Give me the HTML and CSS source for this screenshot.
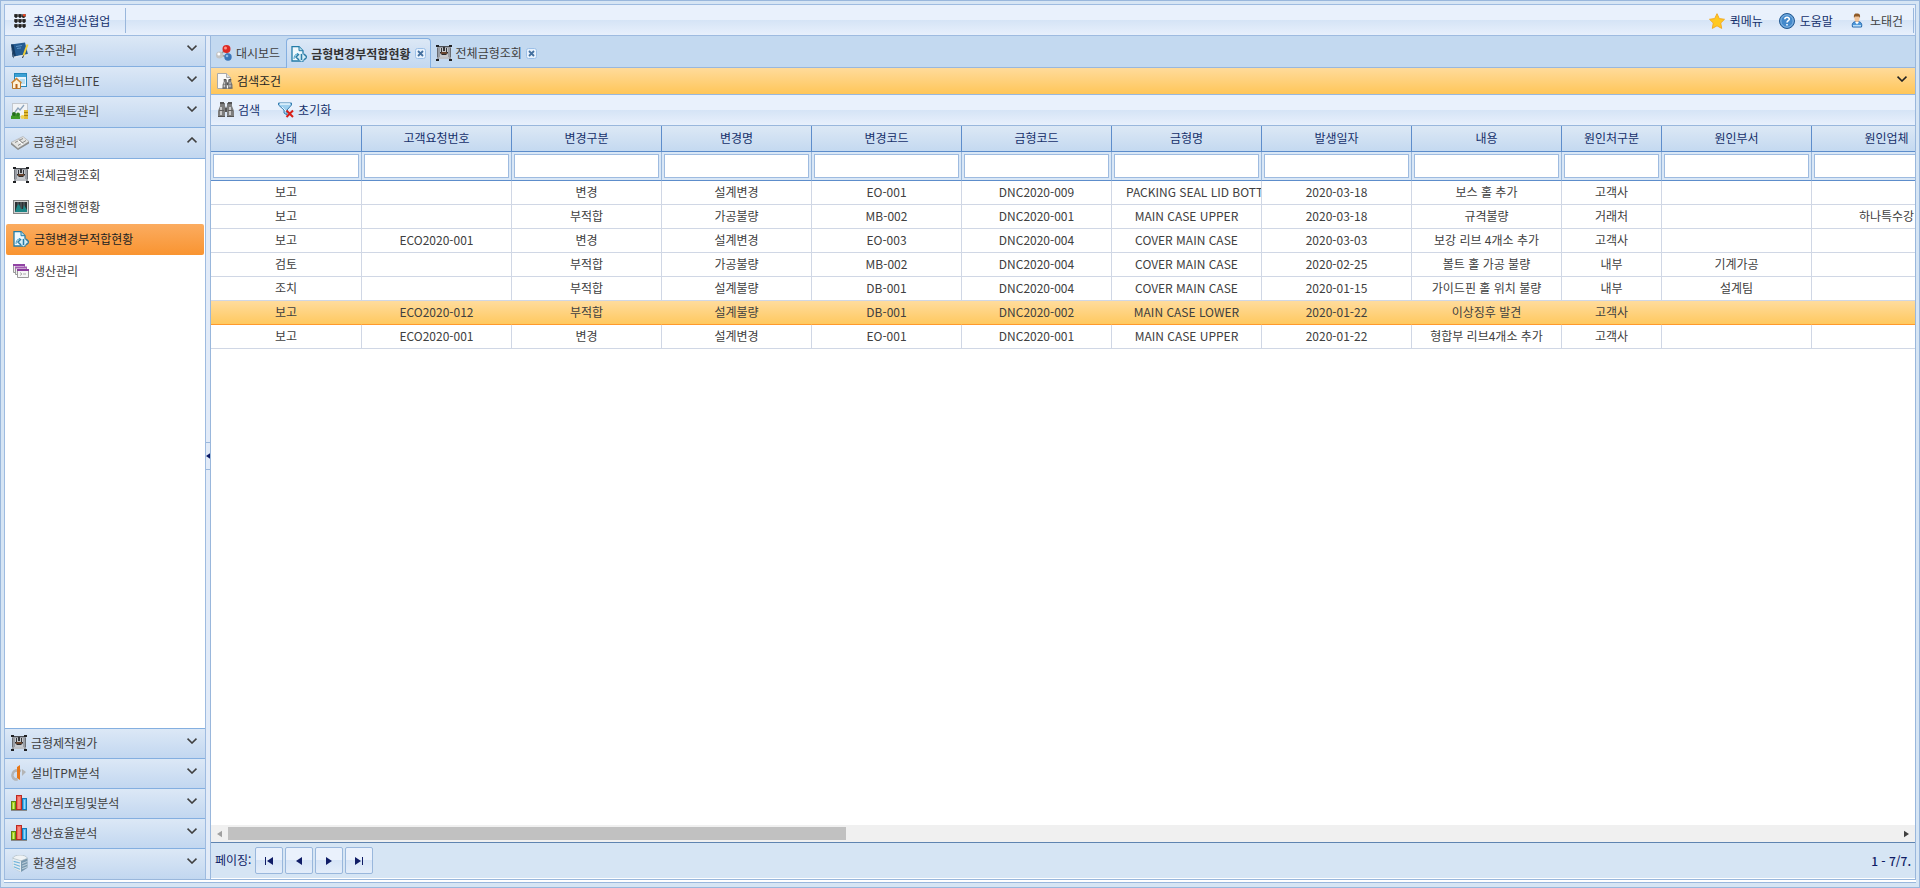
FILE: index.html
```
<!DOCTYPE html>
<html lang="ko">
<head>
<meta charset="utf-8">
<title>금형변경부적합현황</title>
<link rel="stylesheet" href="styles.css">
</head>
<body>
<svg class="defs" aria-hidden="true">
  <defs>
    <symbol id="i-rack" viewBox="0 0 16 16"><g fill="#777"><rect x="1" y="1" width="12" height="3"/><rect x="1" y="6" width="12" height="3"/><rect x="1" y="11" width="12" height="3"/></g><g fill="#222"><ellipse cx="3" cy="3" rx="1.500" ry="2"/><ellipse cx="7" cy="3" rx="1.500" ry="2"/><ellipse cx="3" cy="8" rx="1.500" ry="2"/><ellipse cx="7" cy="8" rx="1.500" ry="2"/><ellipse cx="11" cy="8" rx="1.500" ry="2"/><ellipse cx="3" cy="13" rx="1.500" ry="2"/><ellipse cx="7" cy="13" rx="1.500" ry="2"/><ellipse cx="11" cy="13" rx="1.500" ry="2"/><ellipse cx="10.500" cy="3.500" rx="1.500" ry="1.500"/></g><rect x="10" y="1" width="2.500" height="2.500" rx="1" fill="#f0431c"/></symbol>
    <symbol id="i-book" viewBox="0 0 18 16"><path d="M0 2 14 0l3 12-14 2z" fill="#245b91"/><path d="M0 2 3 16 1.500 14z" fill="#0d2945"/><path d="m0 2 2.500 0L5 14l-2 1z" fill="#143a61"/><path d="M3 15.500 17 13v-1.500L3 14z" fill="#dfe6ee"/><path d="m5 4 6-1M6 6l4-.6" stroke="#5e94c7"/><path d="m16.500 2-4 11" stroke="#f1cf38" stroke-width="2"/><path d="m12.500 13-1 2.500" stroke="#333"/></symbol>
    <symbol id="i-hub" viewBox="0 0 16 16"><rect x="3.500" y=".5" width="12" height="13" fill="#e9f4fb" stroke="#2386ba"/><path d="M4 1h11v3H4z" fill="#3ba0d4"/><path d="M9 6h5v5H9z" fill="#b7dcef"/><path d="M1.500 9.500 5.500 6l4 3.500v6h-8z" fill="#fff1d6" stroke="#b77b32"/><path d="m.5 10 5-4.500 5 4.500" fill="none" stroke="#cd8330" stroke-width="1.500"/><path d="M4.500 11h2v4.500h-2z" fill="#b8651d"/></symbol>
    <symbol id="i-project" viewBox="0 0 18 17"><rect x="1.500" y=".5" width="15" height="13" fill="#f2f4f6" stroke="#c3c8ce"/><path d="m4 9 3-4 2 2 4-5" fill="none" stroke="#8da4bd" stroke-width="1.300"/><path d="M0 16v-3l3-2 2 1 3-1 1 3v2z" fill="#3f9b28"/><circle cx="3" cy="11" r="2" fill="#246d1e"/><circle cx="7" cy="11.500" r="2" fill="#2e8420"/><path d="M13 7h4v9h-4z" fill="#e2bb36"/><path d="M13 9.500h4m-4 3h4" stroke="#a9800d"/><circle cx="11.500" cy="14" r="2" fill="#f1d256"/></symbol>
    <symbol id="i-mold" viewBox="0 0 18 16"><path d="m0 8 12-6 6 5-11 7z" fill="#e4e4e2" stroke="#a5a5a5" stroke-width=".6"/><path d="m0 8 7 6v1.500L0 10zM7 14l11-7v2L7 15.500z" fill="#8b8b89"/><path d="m4 8 8-4M7 11l8-5" stroke="#8b8b89"/><path d="m7 6 5 4" stroke="#fff" stroke-width="1.500"/><path d="m8 5 4 4" stroke="#777"/></symbol>
    <symbol id="i-machine" viewBox="0 0 16 16"><path d="M1 1h14v13H1z" fill="#9a9ea5"/><path d="M0 0h3v2H0zM13 0h3v2h-3zM0 14h3v2H0zM13 14h3v2h-3z" fill="#202124"/><path d="M3 1h10v1H3z" fill="#4c4f55"/><path d="M4 3h8v9H4z" fill="#c6c9cd"/><path d="M1.500 3v9M14.500 3v9" stroke="#696d74"/><path d="M5 3h1v4H5zM10 3h1v4h-1zM7 2h2v4H7z" fill="#33353a"/><path d="M4 7h8v1l-2 2H6L4 8z" fill="#2a2b2e"/><path d="M5 8h6" stroke="#a56131"/><path d="M3 13h10" stroke="#e2e4e7"/></symbol>
    <symbol id="i-monitor" viewBox="0 0 16 14"><rect x=".5" y=".5" width="15" height="13" fill="#d1d1d1" stroke="#858585"/><path d="M2 2h12v10H2z" fill="#2b3033"/><path d="M5 2v10M8 2v10M11 2v10" stroke="#626b70"/><path d="M2 12 4 6l2-2 2 5 2 0 1-4 3 5v2z" fill="#1d8585"/></symbol>
    <symbol id="i-docgear" viewBox="0 0 16 16"><path d="M1 .7h7l4 4V15H1z" fill="#eff8fd" stroke="#237ca8" stroke-width="1.300"/><path d="M8 .7v4h4" fill="#b8dceb" stroke="#237ca8"/><path d="M3 13c0-3 1-5 4-5l-1-1" fill="none" stroke="#42a0c8"/><path d="m10.500 7 5 4-5 4.500-5-4.500z" fill="#d3ecf6"/><path d="m8 8-3 3 3 3m5-6 3 3-3 3" fill="none" stroke="#2a7ca6" stroke-width="1.500"/><path d="M10.500 8v6" stroke="#2a7ca6" stroke-width="1.500"/></symbol>
    <symbol id="i-windows" viewBox="0 0 16 16"><path d="M.5 1.500h11v8H.5z" fill="#eee" stroke="#999"/><path d="M0 1h12v2H0z" fill="#9144a4"/><path d="M2.500 4.500h11v7h-11z" fill="#eee" stroke="#999"/><path d="M2 3.500h12v2H2z" fill="#a459b4"/><path d="M4.500 7.500h11v7h-11z" fill="#f6f6f6" stroke="#999"/><path d="M4 6h12v2H4z" fill="#8a3a9e"/><path d="m7 9.500 2 1.500-2 1.500m3-1.500h3" fill="none" stroke="#aaa"/></symbol>
    <symbol id="i-tpm" viewBox="0 0 16 16"><path d="M10 6C4 4 1 7 1.500 11c.5 3 3 4 5 3" fill="none" stroke="#b4b4b4" stroke-width="2.600"/><path d="M11 4v7l4-4z" fill="#b4b4b4"/><path d="m6 2 3-2v15l-3-2z" fill="#e87716"/></symbol>
    <symbol id="i-bars" viewBox="0 0 16 16"><path d="M0 15.500h16" stroke="#888"/><rect x=".5" y="6.500" width="4" height="8" fill="#a8d51f" stroke="#5c8914"/><rect x="5.500" y=".5" width="5" height="14" fill="#f2685a" stroke="#bd2a22"/><rect x="11.500" y="3.500" width="4" height="11" fill="#4cb6ef" stroke="#1579b8"/><path d="M2.500 8v6M8 2v12M13.500 5v9" stroke="#fff" stroke-opacity=".45"/></symbol>
    <symbol id="i-server" viewBox="0 0 16 16"><path d="M1 3v9l7 4 7-4V3z" fill="#b8c6d0"/><path d="m1 3 8 2v11l-8-4z" fill="#e3ebf0"/><path d="m9 5 6-2v9l-6 4z" fill="#7797ae"/><path d="m2 6 6 1.500M2 8.500l6 2M2 11l6 2.500" stroke="#70b4dc"/><path d="M1 3c2-4 12-4 14 0L9 5.500z" fill="#eff3f5" stroke="#a9b6bf" stroke-width=".6"/><path d="m10 8 5-2M10 10.500l5-2M10 13l5-2" stroke="#bed0dc"/></symbol>
    <symbol id="i-balls" viewBox="0 0 16 16"><path d="m4 10 6-6 2 8z" fill="none" stroke="#999" stroke-width="1.500"/><circle cx="3.500" cy="10" r="3.500" fill="#c4c4c4"/><circle cx="2.800" cy="9" r="1.500" fill="#fff"/><circle cx="10.500" cy="4" r="4" fill="#dd2822"/><circle cx="9.500" cy="3" r="1.500" fill="#ff9186"/><circle cx="12" cy="12" r="3.700" fill="#3b76b9"/><circle cx="11" cy="11" r="1.300" fill="#91bce6"/></symbol>
    <symbol id="i-binoc" viewBox="0 0 16 16"><path d="M2 1h5v3l1 2 1-2V1h5v3l2 5v6H9V9H7v6H0V9l2-5z" fill="#7d7d7d"/><path d="M2 0h4v2H2zM10 0h4v2h-4zM0 14h7v1H0zM9 14h7v1H9zM7 6h2v4H7z" fill="#555"/><path d="M2 5h2v8H2zM11 5h2v8h-2z" fill="#c9c9c9"/><path d="M1 8.500h5M10 8.500h5" stroke="#606060"/></symbol>
    <symbol id="i-docfind" viewBox="0 0 16 16"><path d="M.5.5h9l4 4v11H.500z" fill="#f9f9f9" stroke="#aaa"/><path d="M9.500.5v4h4" fill="#ddd" stroke="#aaa"/><use href="#i-binoc" x="5" y="6" width="11" height="10"/></symbol>
    <symbol id="i-filter" viewBox="0 0 16 16"><path d="M.5 1h13v2L9 8v5l-3-2V8L.5 3z" fill="#9ecfee" stroke="#367daf"/><path d="M2 2h10" stroke="#e9f7ff" stroke-width="1.500"/><path d="m4 5 4 4" stroke="#e9f7ff"/><path d="m8.500 8.500 6.500 6.500m0-6.500-6.500 6.500" stroke="#d81e17" stroke-width="2"/></symbol>
    <symbol id="i-star" viewBox="0 0 16 16"><path d="m8 .7 2.300 4.900 5.200.7-3.800 3.700 1 5.400L8 12.800l-4.700 2.600 1-5.400L.5 6.300l5.200-.7z" fill="#ffc91f" stroke="#f2ab27"/></symbol>
    <symbol id="i-help" viewBox="0 0 16 16"><circle cx="8" cy="8" r="7.500" fill="#4389cb" stroke="#235991"/><circle cx="8" cy="8" r="6.200" fill="none" stroke="#a8cdee" stroke-width=".7"/><path d="M5.800 6.200C6 3.500 10.500 3.700 10.300 6.200 10.200 7.700 8 7.800 8 9.600M8 11v1.500" fill="none" stroke="#fff" stroke-width="1.600"/></symbol>
    <symbol id="i-user" viewBox="0 0 16 16"><path d="M3.500 14c-1-4 1-5.500 4.500-5.500s5.500 1.500 4.500 5.500z" fill="#4c97d9" stroke="#2467ab"/><path d="M4 12h8v1.500H4z" fill="#b9dcf7"/><path d="m6 9 2 2.500L10 9z" fill="#fff"/><ellipse cx="8" cy="5.500" rx="2.500" ry="3.500" fill="#f1c49a"/><path d="M5 5C4.500 1 6 .5 8 .5S11.500 1 11 5l-1-1.500H6z" fill="#8e5927"/></symbol>
    <symbol id="i-chev" viewBox="0 0 10 6"><path d="m.5.700 4.500 4.300 4.500-4.300" fill="none" stroke="currentColor" stroke-width="1.600"/></symbol>
    <symbol id="i-up" viewBox="0 0 10 6"><path d="m.5 5.300 4.500-4.300 4.500 4.300" fill="none" stroke="currentColor" stroke-width="1.600"/></symbol>
    <symbol id="i-close" viewBox="0 0 11 11"><rect x=".5" y=".5" width="10" height="10" rx="2" fill="#e8f2fd" stroke="#9cc0e8"/><path d="m3 3 5 5m0-5L3 8" stroke="#44709f" stroke-width="1.800"/></symbol>
    <symbol id="i-left" viewBox="0 0 6 8"><path d="M6 0v8L0 4z" fill="currentColor"/></symbol>
    <symbol id="i-right" viewBox="0 0 6 8"><path d="M0 0v8l6-4z" fill="currentColor"/></symbol>
    <symbol id="i-first" viewBox="0 0 8 8"><path d="M0 0h1v8H0zM8 0v8L2 4z" fill="currentColor"/></symbol>
    <symbol id="i-last" viewBox="0 0 8 8"><path d="M7 0h1v8H7zM0 0v8l6-4z" fill="currentColor"/></symbol>
  </defs>
</svg>
<div class="app">
  <header class="topbar">
    <button class="brand"><svg class="icon"><use href="#i-rack"/></svg>초연결생산협업</button>
    <nav class="quick">
      <button><svg class="icon"><use href="#i-star"/></svg>퀵메뉴</button>
      <button><svg class="icon"><use href="#i-help"/></svg>도움말</button>
      <button><svg class="icon"><use href="#i-user"/></svg><span class="user-name">노태건</span></button>
    </nav>
  </header>
  <div class="workspace">
    <nav class="sidebar">
      <button class="group"><svg class="icon large"><use href="#i-book"/></svg>수주관리<svg class="chev"><use href="#i-chev"/></svg></button>
      <button class="group short"><svg class="icon"><use href="#i-hub"/></svg>협업허브LITE<svg class="chev"><use href="#i-chev"/></svg></button>
      <button class="group"><svg class="icon large"><use href="#i-project"/></svg>프로젝트관리<svg class="chev"><use href="#i-chev"/></svg></button>
      <button class="group"><svg class="icon large"><use href="#i-mold"/></svg>금형관리<svg class="chev"><use href="#i-up"/></svg></button>
      <div class="menu">
        <button class="item"><svg class="icon"><use href="#i-machine"/></svg>전체금형조회</button>
        <button class="item"><svg class="icon"><use href="#i-monitor"/></svg>금형진행현황</button>
        <button class="item selected"><svg class="icon"><use href="#i-docgear"/></svg>금형변경부적합현황</button>
        <button class="item"><svg class="icon"><use href="#i-windows"/></svg>생산관리</button>
      </div>
      <button class="group"><svg class="icon"><use href="#i-machine"/></svg>금형제작원가<svg class="chev"><use href="#i-chev"/></svg></button>
      <button class="group"><svg class="icon"><use href="#i-tpm"/></svg>설비TPM분석<svg class="chev"><use href="#i-chev"/></svg></button>
      <button class="group"><svg class="icon"><use href="#i-bars"/></svg>생산리포팅및분석<svg class="chev"><use href="#i-chev"/></svg></button>
      <button class="group"><svg class="icon"><use href="#i-bars"/></svg>생산효율분석<svg class="chev"><use href="#i-chev"/></svg></button>
      <button class="group"><svg class="icon large"><use href="#i-server"/></svg>환경설정<svg class="chev"><use href="#i-chev"/></svg></button>
    </nav>
    <div class="splitter"><button class="collapse" aria-label="메뉴 접기"><svg><use href="#i-left"/></svg></button></div>
    <main class="main">
      <div class="tabs" role="tablist">
        <div class="tab"><svg class="icon"><use href="#i-balls"/></svg><button role="tab">대시보드</button></div>
        <div class="tab active"><svg class="icon"><use href="#i-docgear"/></svg><button role="tab" aria-selected="true">금형변경부적합현황</button><button class="close" aria-label="닫기"><svg><use href="#i-close"/></svg></button></div>
        <div class="tab"><svg class="icon"><use href="#i-machine"/></svg><button role="tab">전체금형조회</button><button class="close" aria-label="닫기"><svg><use href="#i-close"/></svg></button></div>
      </div>
      <button class="criteria"><svg class="icon"><use href="#i-docfind"/></svg>검색조건<svg class="chev"><use href="#i-chev"/></svg></button>
      <div class="tools">
        <button><svg class="icon"><use href="#i-binoc"/></svg>검색</button>
        <button><svg class="icon"><use href="#i-filter"/></svg>초기화</button>
      </div>
      <div class="grid">
        <table>
          <colgroup><col class="first"><col><col><col><col><col><col><col><col><col class="narrow"><col><col></colgroup>
          <thead>
            <tr><th>상태</th><th>고객요청번호</th><th>변경구분</th><th>변경명</th><th>변경코드</th><th>금형코드</th><th>금형명</th><th>발생일자</th><th>내용</th><th>원인처구분</th><th>원인부서</th><th>원인업체</th></tr>
            <tr class="filters"><td><input type="text" aria-label="상태"></td><td><input type="text" aria-label="고객요청번호"></td><td><input type="text" aria-label="변경구분"></td><td><input type="text" aria-label="변경명"></td><td><input type="text" aria-label="변경코드"></td><td><input type="text" aria-label="금형코드"></td><td><input type="text" aria-label="금형명"></td><td><input type="text" aria-label="발생일자"></td><td><input type="text" aria-label="내용"></td><td><input type="text" aria-label="원인처구분"></td><td><input type="text" aria-label="원인부서"></td><td><input type="text" aria-label="원인업체"></td></tr>
          </thead>
          <tbody>
            <tr><td>보고</td><td></td><td>변경</td><td>설계변경</td><td>EO-001</td><td>DNC2020-009</td><td class="long">PACKING SEAL LID BOTTOM</td><td>2020-03-18</td><td>보스 홀 추가</td><td>고객사</td><td></td><td></td></tr>
            <tr><td>보고</td><td></td><td>부적합</td><td>가공불량</td><td>MB-002</td><td>DNC2020-001</td><td>MAIN CASE UPPER</td><td>2020-03-18</td><td>규격불량</td><td>거래처</td><td></td><td>하나특수강</td></tr>
            <tr><td>보고</td><td>ECO2020-001</td><td>변경</td><td>설계변경</td><td>EO-003</td><td>DNC2020-004</td><td>COVER MAIN CASE</td><td>2020-03-03</td><td>보강 리브 4개소 추가</td><td>고객사</td><td></td><td></td></tr>
            <tr><td>검토</td><td></td><td>부적합</td><td>가공불량</td><td>MB-002</td><td>DNC2020-004</td><td>COVER MAIN CASE</td><td>2020-02-25</td><td>볼트 홀 가공 불량</td><td>내부</td><td>기계가공</td><td></td></tr>
            <tr><td>조치</td><td></td><td>부적합</td><td>설계불량</td><td>DB-001</td><td>DNC2020-004</td><td>COVER MAIN CASE</td><td>2020-01-15</td><td>가이드핀 홀 위치 불량</td><td>내부</td><td>설계팀</td><td></td></tr>
            <tr class="current"><td>보고</td><td>ECO2020-012</td><td>부적합</td><td>설계불량</td><td>DB-001</td><td>DNC2020-002</td><td>MAIN CASE LOWER</td><td>2020-01-22</td><td>이상징후 발견</td><td>고객사</td><td></td><td></td></tr>
            <tr><td>보고</td><td>ECO2020-001</td><td>변경</td><td>설계변경</td><td>EO-001</td><td>DNC2020-001</td><td>MAIN CASE UPPER</td><td>2020-01-22</td><td>형합부 리브4개소 추가</td><td>고객사</td><td></td><td></td></tr>
          </tbody>
        </table>
      </div>
      <div class="scroll"><svg class="off"><use href="#i-left"/></svg><div class="track"><div class="thumb"></div></div><svg><use href="#i-right"/></svg></div>
      <footer class="paging">
        <span>페이징:</span>
        <button aria-label="처음"><svg class="wide"><use href="#i-first"/></svg></button>
        <button aria-label="이전"><svg><use href="#i-left"/></svg></button>
        <button aria-label="다음"><svg><use href="#i-right"/></svg></button>
        <button aria-label="마지막"><svg class="wide"><use href="#i-last"/></svg></button>
        <span class="count">1 - 7/7.</span>
      </footer>
    </main>
  </div>
</div>
</body>
</html>
```
FILE: styles.css
```
* { box-sizing: border-box; }
body {
  margin: 0;
  font: 12px/18px "Noto Sans CJK KR", sans-serif;
  color: #404040;
  background: #d6e5f4;
}
button {
  font: inherit;
  color: inherit;
  border: 0;
  padding: 0;
  background: none;
  display: flex;
  align-items: center;
  white-space: nowrap;
}
svg { display: block; flex: none; }
.defs { position: absolute; width: 0; height: 0; }
.icon { width: 16px; height: 16px; }
.large { width: 18px; height: 17px; }
.app {
  height: 100vh;
  display: flex;
  flex-direction: column;
  border: 1px solid #99b7dc;
  padding: 3px;
}
.topbar {
  flex: none;
  height: 32px;
  display: flex;
  justify-content: space-between;
  padding: 3px 1px 2px 8px;
  border: 1px solid #9ebbe0;
  color: #15306b;
  background: linear-gradient(#e9f1fc 0 50%, #d5e4f6 50%, #e8f0fc);
}
.brand { gap: 4px; padding-right: 15px; border-right: 1px solid #99b7dc; }
.quick { display: flex; gap: 16px; padding-right: 10px; border-right: 1px solid #99b7dc; }
.quick button { gap: 5px; }
.user-name { color: #404040; }
.workspace {
  flex: 1;
  min-height: 0;
  display: flex;
  margin-bottom: 4px;
  border-bottom: 1px solid #99b7dc;
  box-shadow: 0 2px #fff, 0 3px #99b7dc;
}
.sidebar {
  flex: none;
  width: 202px;
  display: flex;
  flex-direction: column;
  border: solid #9ebbe0;
  border-width: 0 1px;
  background: #fff;
}
.group {
  flex: none;
  height: 31px;
  gap: 4px;
  padding: 0 8px 2px 6px;
  border-bottom: 1px solid #84afe0;
  background: linear-gradient(#dce8f6, #c2d7f0);
}
.short { height: 30px; }
.menu ~ .group { height: 30px; border-top: 1px solid #84afe0; border-bottom: 0; }
.menu ~ .group:last-child { height: 31px; }
.chev { width: 10px; height: 6px; margin: 0 0 4px auto; }
.menu {
  flex: 1;
  display: flex;
  flex-direction: column;
  gap: 1px;
  padding: 1px;
}
.item { height: 31px; gap: 5px; padding: 0 7px 1px; border-radius: 2px; }
.selected { color: #222; background: linear-gradient(#fbac60, #f99431); }
.splitter {
  flex: none;
  width: 4px;
  display: flex;
  flex-direction: column;
  justify-content: center;
  padding-bottom: 4px;
  background: #e2ebf8;
}
.collapse {
  height: 28px;
  color: #0b1a66;
  border: solid #99b7dc;
  border-width: 1px 0;
}
.collapse svg { width: 4px; height: 6px; }
.main {
  flex: 1;
  min-width: 0;
  display: flex;
  flex-direction: column;
  border: solid #99b7dc;
  border-width: 0 1px;
  background: #fff;
}
.tabs {
  flex: none;
  height: 32px;
  display: flex;
  padding-top: 2px;
  border-bottom: 1px solid #99b7dc;
  background: #c3d9f0;
}
.tab {
  height: 30px;
  display: flex;
  align-items: center;
  gap: 4px;
  padding: 0 6px 0 5px;
}
.active {
  color: #333;
  font-weight: bold;
  padding: 0 4px;
  border: 1px solid #84afe0;
  border-bottom: 0;
  border-radius: 4px 4px 0 0;
  background: linear-gradient(#dce8f6, #c3d8f0);
}
.close svg { width: 11px; height: 11px; }
.criteria {
  flex: none;
  height: 27px;
  gap: 4px;
  padding: 0 8px 0 6px;
  color: #222;
  border-bottom: 1px solid #99b7dc;
  background: linear-gradient(#ffdb9b, #ffc659);
}
.tools {
  flex: none;
  height: 31px;
  display: flex;
  gap: 18px;
  padding: 0 7px;
  color: #15306b;
  border-bottom: 1px solid #99b7dc;
  background: linear-gradient(#e9f1fc 0 50%, #d5e4f6 50%, #e8f0fc);
}
.tools button { gap: 4px; }
.grid { flex: 1; min-height: 0; overflow: hidden; }
table {
  width: 1751px;
  table-layout: fixed;
  border-collapse: separate;
  border-spacing: 0;
}
col { width: 150px; }
.first { width: 151px; }
.narrow { width: 100px; }
th, td {
  padding: 0 14px 2px;
  font-weight: normal;
  text-align: center;
  white-space: nowrap;
  overflow: hidden;
}
th {
  height: 26px;
  color: #15306b;
  border-right: 1px solid #5d8dcb;
  border-bottom: 1px solid #5d8dcb;
  background: linear-gradient(#dce8f5, #c4d9f0);
}
tbody td { height: 24px; border-right: 1px solid #d0d7e5; border-bottom: 1px solid #d0d7e5; }
tbody .long { padding-right: 0; text-align: left; }
.filters td {
  height: 29px;
  padding: 2px;
  border-right: 1px solid #99b7dc;
  border-bottom: 1px solid #5d8dcb;
  background: #d9e7f6;
}
.filters input {
  display: block;
  width: 100%;
  height: 24px;
  border: 1px solid #9ebbe0;
  background: #fff;
}
.current { background: linear-gradient(#ffdc9d, #ffc85d); }
.current td { border-right-color: transparent; border-bottom-color: #ff9a2c; }
.scroll {
  flex: none;
  height: 17px;
  display: flex;
  align-items: center;
  padding: 0 6px;
  color: #404040;
  background: #f0f0f0;
}
.scroll svg { width: 5px; height: 8px; }
.scroll .off { color: #a0a0a0; }
.track { flex: 1; padding: 0 6px; }
.thumb { width: 37%; height: 13px; background: #c1c1c1; }
.paging {
  flex: none;
  height: 37px;
  display: flex;
  align-items: center;
  gap: 2px;
  padding: 0 4px;
  color: #0f1c66;
  border-top: 1px solid #5f84b0;
  border-bottom: 1px solid #fff;
  background: #d6e5f4;
}
.paging span { padding: 0 2px 2px 0; }
.paging button {
  width: 28px;
  height: 27px;
  justify-content: center;
  border: 1px solid #99b7dc;
  border-radius: 2px;
  background: linear-gradient(#eaf1fc 0 50%, #d7e5f7 50%, #e3edfa);
}
.paging svg { width: 6px; height: 8px; }
.paging .wide { width: 8px; }
.paging .count { margin-left: auto; padding: 0; font-weight: 500; }
```
